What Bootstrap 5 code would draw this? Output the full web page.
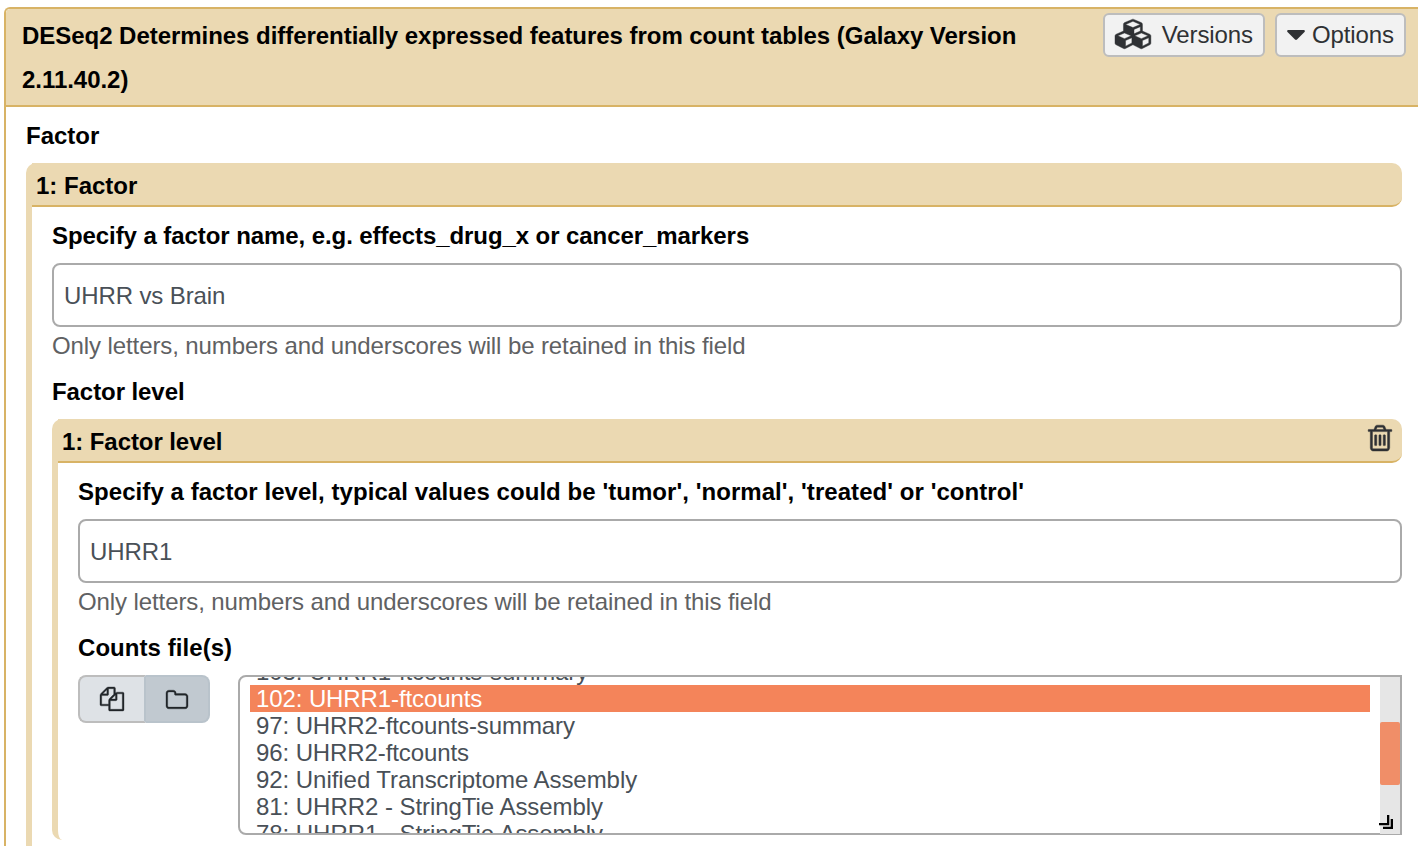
<!DOCTYPE html>
<html lang="en">
<head>
<meta charset="utf-8">
<title>DESeq2</title>
<link href="https://cdn.jsdelivr.net/npm/bootstrap@5.3.0/dist/css/bootstrap.min.css" rel="stylesheet">
<style>
html{overflow:hidden}
body{font-family:"Liberation Sans",Arial,sans-serif;font-size:24px;line-height:36px;color:#000;background:#fff;height:846px;overflow:hidden}
.tool-panel{margin:7px 0 0 4px;border:2px solid #d8b365;border-right:0;border-bottom:0;border-radius:6px 0 0 0;height:839px;overflow:hidden}
.tool-head{background:#ebd9b2;border-bottom:2px solid #d8b365;height:98px;padding:4px 12px 0 16px;border-radius:4px 0 0 0}
.tool-title{font-size:24px;line-height:44px;width:1040px;padding-top:1px;letter-spacing:-.04px}
.tool-btn{--bs-btn-font-size:24px;--bs-btn-bg:#f2f2f2;--bs-btn-border-color:#bdbdbd;--bs-btn-border-width:2px;--bs-btn-border-radius:6px;--bs-btn-padding-x:10px;--bs-btn-padding-y:0;height:44px;color:#2f3134;line-height:40px;letter-spacing:-.1px}
.tool-body{padding:10px 16px 0 20px}
.field-label{height:36px;margin-bottom:10px;padding-top:1px}
.name-label{letter-spacing:-.075px}
.level-label{letter-spacing:.06px}
.section-box{border-left:6px solid #ebd9b2;border-radius:10px}
.outer-box{height:720px}
.section-head{background:#ebd9b2;border-bottom:2px solid #d8b365;height:44px;padding:1px 10px 0 4px;line-height:44px;border-radius:0 10px 10px 0}
.section-body{padding:10px 0 0 20px}
.inner-box{height:421px}
.text-input.form-control{height:64px;border:2px solid #aaa;border-radius:8px;font-size:24px;padding:2px 10px 0;color:#495057;letter-spacing:-.11px}
.help{color:#5f6163;height:36px;margin-bottom:10px;padding-top:1px;letter-spacing:-.1px}
.source-group{width:132px;height:48px}
.source-group .btn{--bs-btn-padding-x:0;--bs-btn-padding-y:0;--bs-btn-border-width:2px;--bs-btn-border-radius:8px;width:68px;border-color:#bdbdbd #b9c3cb #bdbdbd #bdbdbd;background:#dee2e6;color:#212529}
.source-group .btn.picked{background:#c1c9d0;border-color:#b9c3cb;border-left-width:0;width:64px;margin-left:0}
.list-box{height:160px;border:2px solid #aaa;border-radius:8px 0 0 8px;margin-left:28px}
.option-view{height:156px;padding:0 10px;overflow:hidden}
.option-list{margin-top:-19px;color:#495057;letter-spacing:-.05px}
.option-list div{height:27px;line-height:27px;padding-left:6px;white-space:nowrap}
.option-list .tight{letter-spacing:-.1px}
.option-list .chosen{background:#f4845a;color:#fff}
.scroll-track{width:20px;height:157px;background:#e6e6e6;padding-top:45px}
.scroll-thumb{height:63px;background:#f08e68;border-radius:2px}
.resize-grip{right:7px;bottom:4px}
svg{display:block;fill:currentColor}
.glyph{stroke:currentColor;stroke-width:26px;overflow:visible}
</style>
<script src="https://cdn.jsdelivr.net/npm/bootstrap@5.3.0/dist/js/bootstrap.bundle.min.js"></script>
</head>
<body>
<main class="tool-panel">
  <header class="tool-head d-flex justify-content-between align-items-start">
    <h1 class="tool-title fw-bold mb-0">DESeq2 Determines differentially expressed features from count tables (Galaxy Version 2.11.40.2)</h1>
    <div class="d-flex flex-shrink-0" style="gap:10px">
      <button class="btn tool-btn d-flex align-items-center" type="button">
        <svg class="glyph" width="38" height="30" viewBox="0 0 2304 1792" style="margin:-2px 9px 0 0"><path d="M640 1632l384-192v-314l-384 164v342zm-64-454l404-173-404-173-404 173zm1088 454l384-192v-314l-384 164v342zm-64-454l404-173-404-173-404 173zm-448-293l384-165v-266l-384 164v267zm-64-379l441-189-441-189-441 189zm1088 518v416q0 36-19 67t-52 47l-448 224q-25 14-57 14t-57-14l-448-224q-4-2-7-4-2 2-7 4l-448 224q-25 14-57 14t-57-14l-448-224q-33-16-52-47t-19-67v-416q0-38 21.500-70t56.500-48l434-186v-400q0-38 21.500-70t56.500-48l448-192q23-10 50-10t50 10l448 192q35 16 56.500 48t21.500 70v400l434 186q36 16 57 48t21 70z"/></svg>
        Versions</button>
      <button class="btn tool-btn d-flex align-items-center" type="button">
        <svg width="18" height="10" viewBox="0 0 18 10" style="margin-right:7px"><path d="M1 0h16q1.500 .6.500 2L10 9.500q-1 .8-2 0L.5 2Q-.5.600 1 0z"/></svg>
        Options</button>
    </div>
  </header>
  <div class="tool-body">
    <div class="field-label fw-bold">Factor</div>
    <section class="section-box outer-box">
      <div class="section-head fw-bold">1: Factor</div>
      <div class="section-body">
        <label class="field-label name-label fw-bold d-block" for="factor">Specify a factor name, e.g. effects_drug_x or cancer_markers</label>
        <input class="form-control text-input" id="factor" value="UHRR vs Brain">
        <div class="help">Only letters, numbers and underscores will be retained in this field</div>
        <div class="field-label name-label fw-bold">Factor level</div>
        <section class="section-box inner-box">
          <div class="section-head name-label fw-bold d-flex justify-content-between">1: Factor level
            <svg class="glyph" width="24" height="28" viewBox="192 0 1408 1664" style="margin-top:3px;color:#2f3134"><path d="M704 736v576q0 14-9 23t-23 9h-64q-14 0-23-9t-9-23v-576q0-14 9-23t23-9h64q14 0 23 9t9 23zm256 0v576q0 14-9 23t-23 9h-64q-14 0-23-9t-9-23v-576q0-14 9-23t23-9h64q14 0 23 9t9 23zm256 0v576q0 14-9 23t-23 9h-64q-14 0-23-9t-9-23v-576q0-14 9-23t23-9h64q14 0 23 9t9 23zm128 724v-948h-896v948q0 22 7 40.500t14.500 27 10.500 8.500h832q3 0 10.500-8.500t14.500-27 7-40.500zm-672-1076h448l-48-117q-7-9-17-11h-317q-10 2-17 11zm928 32v64q0 14-9 23t-23 9h-96v948q0 83-47 143.500t-113 60.500h-832q-66 0-113-58.500t-47-141.500v-952h-96q-14 0-23-9t-9-23v-64q0-14 9-23t23-9h309l70-167q15-37 54-63t79-26h320q40 0 79 26t54 63l70 167h309q14 0 23 9t9 23z"/></svg>
          </div>
          <div class="section-body">
            <label class="field-label level-label fw-bold d-block" for="level">Specify a factor level, typical values could be 'tumor', 'normal', 'treated' or 'control'</label>
            <input class="form-control text-input" id="level" value="UHRR1">
            <div class="help">Only letters, numbers and underscores will be retained in this field</div>
            <div class="field-label level-label fw-bold">Counts file(s)</div>
            <div class="d-flex">
              <div class="btn-group source-group flex-shrink-0">
                <button class="btn d-flex align-items-center justify-content-center flex-grow-0 flex-shrink-0" type="button" aria-label="Multiple datasets"><svg class="glyph" width="24" height="24" viewBox="0 0 1792 1792"><path d="M1696 384q40 0 68 28t28 68v1216q0 40-28 68t-68 28h-960q-40 0-68-28t-28-68v-288h-544q-40 0-68-28t-28-68v-672q0-40 20-88t48-76l408-408q28-28 76-48t88-20h416q40 0 68 28t28 68v328q68-40 128-40h416zm-544 213l-299 299h299v-299zm-640-384l-299 299h299v-299zm196 647l316-316v-416h-384v416q0 40-28 68t-68 28h-416v640h512v-256q0-40 20-88t48-76zm956 804v-1152h-384v416q0 40-28 68t-68 28h-416v640h896z"/></svg></button>
                <button class="btn picked d-flex align-items-center justify-content-center flex-grow-0 flex-shrink-0 ms-0" type="button" aria-label="Dataset collection"><svg class="glyph" width="22" height="19" viewBox="64 128 1664 1408"><path d="M1600 1312v-704q0-40-28-68t-68-28h-704q-40 0-68-28t-28-68v-64q0-40-28-68t-68-28h-320q-40 0-68 28t-28 68v960q0 40 28 68t68 28h1216q40 0 68-28t28-68zm128-704v704q0 92-66 158t-158 66h-1216q-92 0-158-66t-66-158v-960q0-92 66-158t158-66h320q92 0 158 66t66 158v32h672q92 0 158 66t66 158z"/></svg></button>
              </div>
              <div class="list-box d-flex flex-grow-1 position-relative">
                <div class="option-view flex-grow-1">
                  <div class="option-list">
                    <div class="tight">103: UHRR1-ftcounts-summary</div>
                    <div class="chosen tight">102: UHRR1-ftcounts</div>
                    <div class="tight">97: UHRR2-ftcounts-summary</div>
                    <div class="tight">96: UHRR2-ftcounts</div>
                    <div>92: Unified Transcriptome Assembly</div>
                    <div>81: UHRR2 - StringTie Assembly</div>
                    <div>78: UHRR1 - StringTie Assembly</div>
                  </div>
                </div>
                <div class="scroll-track"><div class="scroll-thumb"></div></div>
                <svg class="resize-grip position-absolute" width="14" height="14" viewBox="0 0 14 14"><path d="M8 0h2.300v10.300H0V8h8zM11.700 4H14v10H4v-2.300h7.700z" fill="#000"/></svg>
              </div>
            </div>
          </div>
        </section>
      </div>
    </section>
  </div>
</main>
</body>
</html>
